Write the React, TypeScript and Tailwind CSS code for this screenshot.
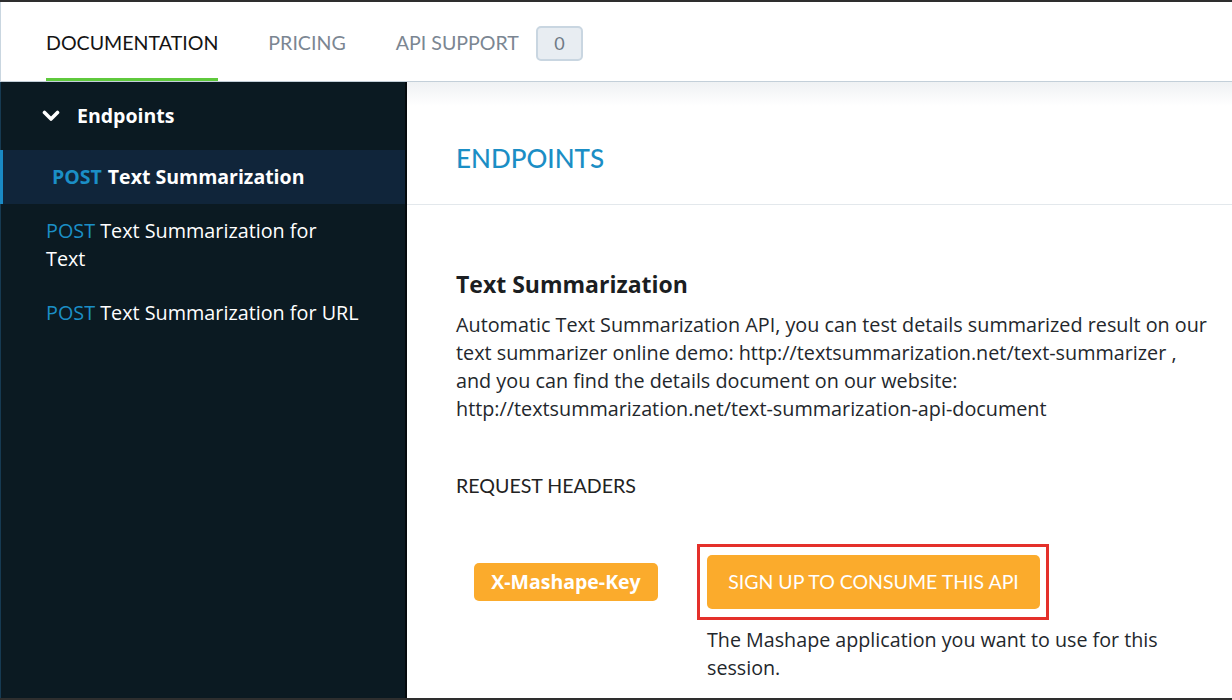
import React from 'react';

interface Endpoint {
  method: string;
  name: string;
  active?: boolean;
}

const endpoints: Endpoint[] = [
  { method: 'POST', name: 'Text Summarization', active: true },
  { method: 'POST', name: 'Text Summarization for Text' },
  { method: 'POST', name: 'Text Summarization for URL' },
];

const ChevronDown = () => (
  <svg width="18" height="12" viewBox="0 0 18 12" fill="none">
    <path d="M2.5 2.5 L9 9 L15.5 2.5" stroke="white" strokeWidth="3.6" strokeLinecap="round" strokeLinejoin="round" />
  </svg>
);

const Header = () => (
  <div className="h-[80px] flex items-stretch bg-white border-b border-[#c3cfd9] border-l border-l-[#c9d6e0] pl-[45px]">
    <div className="flex items-center pt-[6px] border-b-[3px] border-[#5fc93c] text-[19.6px] text-[#141414] font-['Lato',sans-serif]">
      DOCUMENTATION
    </div>
    <div className="flex items-center pt-[3px] ml-[50px] text-[19.6px] text-[#7b8692] font-['Lato',sans-serif]">
      PRICING
    </div>
    <div className="flex items-center pt-[3px] ml-[50px] text-[19.6px] text-[#7b8692] font-['Lato',sans-serif]">
      API SUPPORT
      <span className="ml-[17px] w-[47px] h-[35px] flex items-center justify-center rounded-[5px] bg-[#e8edf2] border-2 border-[#c9d6e1] text-[18px] text-[#6f7a86]">
        0
      </span>
    </div>
  </div>
);

const Sidebar = () => (
  <div className="w-[407px] shrink-0 bg-[#0b1a22] border-r-2 border-r-[#050a0d] border-l border-l-[#163a52] font-['Open_Sans',sans-serif]">
    <div className="h-[68px] flex items-center pl-[41px] text-white">
      <ChevronDown />
      <span className="ml-[17px] text-[19.5px] font-bold">Endpoints</span>
    </div>
    {endpoints.map((e, i) =>
      e.active ? (
        <div key={i} className="h-[54px] -ml-px flex items-center pl-[49px] bg-[#10253a] border-l-[3px] border-[#1a8ac4] text-[19.5px] font-bold">
          <span className="text-[#1b8fc6]">{e.method}</span>
          <span className="ml-[6px] text-white">{e.name}</span>
        </div>
      ) : (
        <div key={i} className="py-[13px] pl-[45px] text-[19.8px] leading-[28px]">
          <div className="max-w-[313px]">
            <span className="text-[#1b8fc6]">{e.method}</span>{' '}
            <span className="text-white">{e.name}</span>
          </div>
        </div>
      )
    )}
  </div>
);

const Content = () => (
  <div className="flex-1 bg-white font-['Open_Sans',sans-serif] text-[#23272c]">
    <div className="h-[123px] flex items-center pl-[49px] pt-[30px] border-b border-[#e3e8ec] bg-[linear-gradient(to_bottom,#eff1f3,#ffffff_24px)]">
      <h1 className="text-[26px] text-[#1b8ec5] font-['Lato',sans-serif] font-medium">ENDPOINTS</h1>
    </div>
    <div className="pl-[49px] pt-[65px]">
      <h2 className="text-[23px] leading-[28px] font-bold text-[#1b1e22]">Text Summarization</h2>
      <p className="mt-[13px] max-w-[756px] text-[19.8px] leading-[28px]">
        Automatic Text Summarization API, you can test details summarized result on our text summarizer online demo: http://textsummarization.net/text-summarizer , and you can find the details document on our website: http://textsummarization.net/text-summarization-api-document
      </p>
      <div className="mt-[51px] text-[19.6px] leading-[24px] font-['Lato',sans-serif] text-[#222]">REQUEST HEADERS</div>
      <div className="mt-[46px] flex items-start">
        <div className="mt-[19px] ml-[18px] w-[184px] h-[38px] rounded-[5px] bg-[#fbab2c] flex items-center justify-center text-white font-bold text-[19.5px]">
          X-Mashape-Key
        </div>
        <div className="ml-[39px] flex flex-col">
          <div className="border-[3px] border-[#e4302a] pt-[8px] pb-[8px] pl-[7px] pr-[6px] w-fit">
            <div className="w-[333px] h-[54px] rounded-[5px] bg-[#fbab2c] flex items-center justify-center text-white text-[19.5px] font-['Lato',sans-serif]">
              SIGN UP TO CONSUME THIS API
            </div>
          </div>
          <p className="mt-[6px] ml-[10px] w-[500px] text-[19.7px] leading-[28px]">
            The Mashape application you want to use for this session.
          </p>
        </div>
      </div>
    </div>
  </div>
);

export default function App() {
  return (
    <div className="w-[1232px] h-[700px] bg-[#2e2e2e] pt-[2px] pb-[2px] overflow-hidden">
      <div className="h-[696px] flex flex-col bg-white overflow-hidden">
        <Header />
        <div className="flex flex-1 overflow-hidden">
          <Sidebar />
          <Content />
        </div>
      </div>
    </div>
  );
}
